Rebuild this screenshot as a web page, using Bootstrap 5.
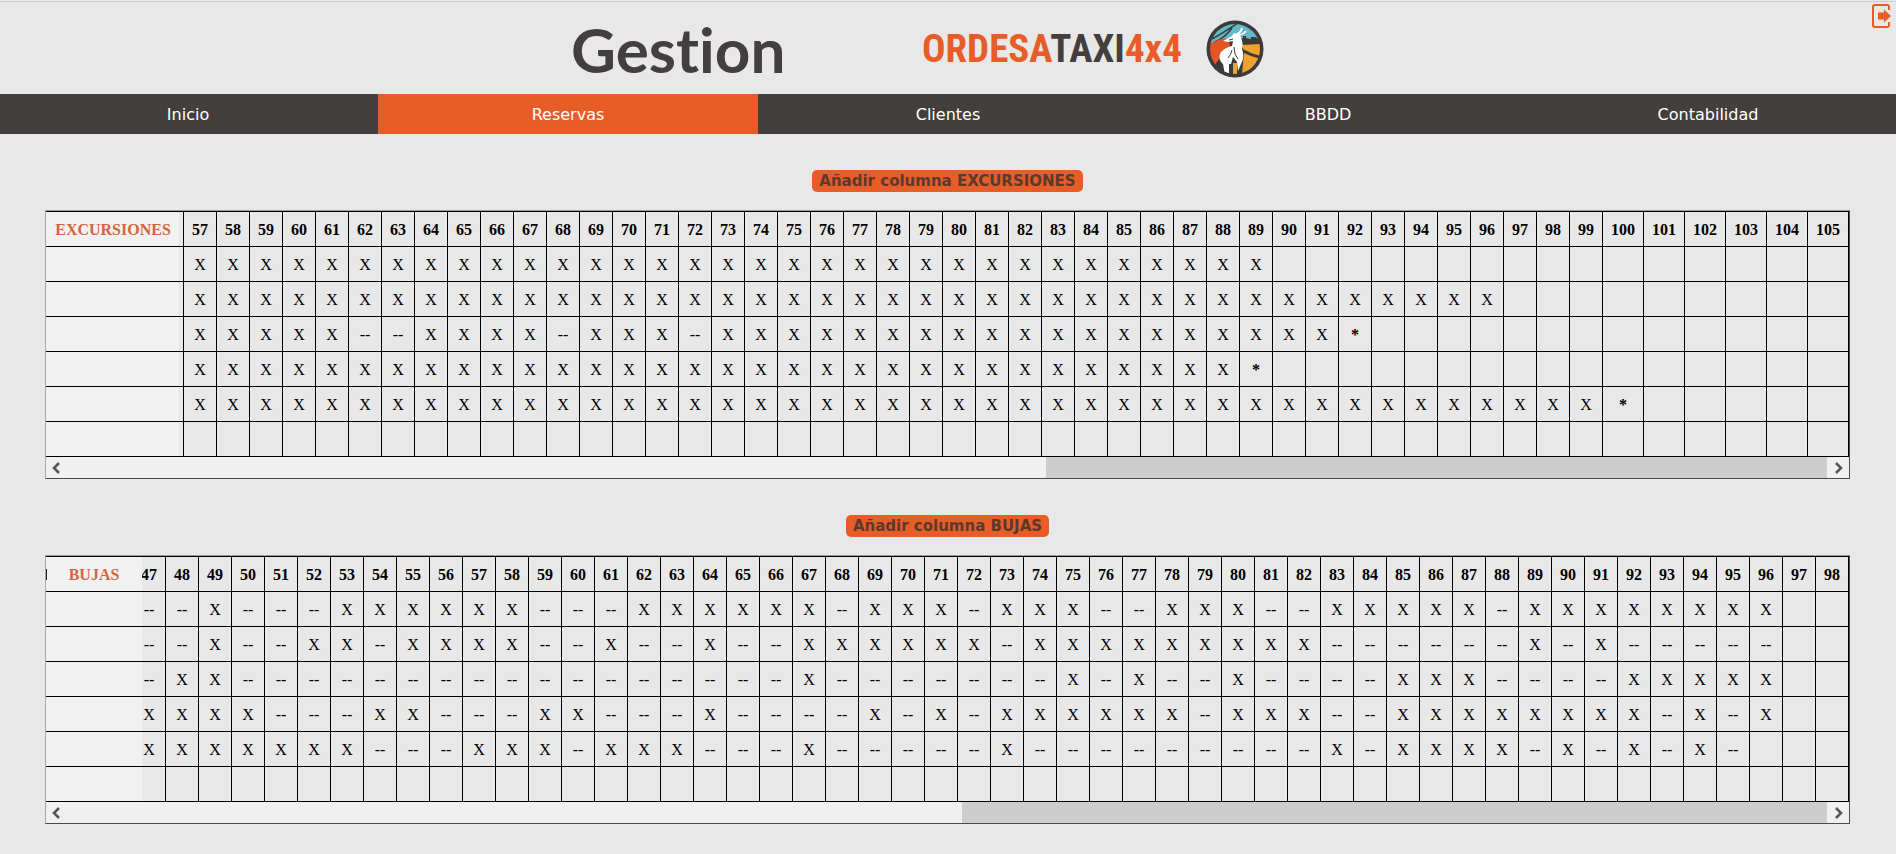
<!DOCTYPE html>
<html lang="es">
<head>
<meta charset="utf-8">
<meta name="viewport" content="width=device-width, initial-scale=1">
<title>Gestion - Ordesa Taxi 4x4</title>
<link href="https://cdn.jsdelivr.net/npm/bootstrap@5.3.0/dist/css/bootstrap.min.css" rel="stylesheet">
<style>
  :root { --naranja: #e85c27; --gris: #433f3e; --fondo: #e8e8e8; }
  body { background: var(--fondo); color: #000; font-family: "DejaVu Sans", Verdana, sans-serif; overflow-x: hidden; }
  .cabecera { height: 94px; border-top: 1px solid #c9cecb; margin-top: 1px; margin-bottom: -1px; padding-left: 571px; }
  @media (max-width: 1400px) { .cabecera { padding-left: 20px; } }
  .rotulo { width: 351px; font: 700 62px/94px Lato, sans-serif; font-variant-ligatures: none; color: var(--gris); }
  .marca { width: 284px; font: 700 39px/94px "Liberation Sans Narrow", "Roboto Condensed", "Liberation Sans", sans-serif; color: var(--naranja); white-space: nowrap; }
  .marca span { color: var(--gris); }
  .salir { top: 2px; right: 4px; line-height: 0; }
  .menu { background: var(--gris); margin: 0 -2px; }
  .menu .nav-link { color: #fff; border-radius: 0; padding: 9px 0 7px; font: 16px/24px "DejaVu Sans", Verdana, sans-serif; }
  .menu .nav-link.active { background: var(--naranja); }
  .bloque { padding: 36px 46px 0 45px; }
  .anadir { background: var(--naranja); color: #5b3a2c; border: 0; border-radius: 5px; padding: 1px 7px 0; font: 700 15px/21px "DejaVu Sans", Verdana, sans-serif; margin-bottom: 18px; }
  .marco { border: 1px solid #4b4b4b; border-top-color: #9b9b9b; border-left-color: #a9a9a9; }
  .visor { overflow-x: hidden; }
  .rejilla { border-collapse: separate; border-spacing: 0; width: max-content; min-width: 100%; border-top: 1px solid #000; font: 16px/18px "Liberation Serif", "Times New Roman", serif; text-align: center; }
  .rejilla th, .rejilla td { height: 35px; padding: 9px 8px 7px; border: solid #000; border-width: 0 1px 1px 0; min-width: 33px; }
  .rejilla .fija { position: sticky; left: 0; color: #d5653e; }
  .ancha .fija { min-width: 138px; padding-right: 11px; background: linear-gradient(90deg, #f1f1f1 133px, var(--fondo) 133px); }
  .corta .fija { min-width: 96px; border-right: 0; background: #f1f1f1; }
  .corta thead .fija { background: linear-gradient(#222, #222) 0 50% / 1px 11px no-repeat #f1f1f1; }
  .barra { height: 21px; background: #f0f0f0; }
  .barra button { width: 22px; border: 0; padding: 0; background: #f0f0f0; line-height: 0; }
  .pulgar { background: #cdcdcd; }
</style>
</head>
<body>
<header class="cabecera d-flex position-relative">
  <div class="rotulo">Gestion</div>
  <div class="marca">ORDESA<span>TAXI</span>4x4</div>
  <svg class="align-self-center" width="58" height="58" viewBox="0 0 58 58" role="img" aria-label="Ordesa Taxi">
    <defs><clipPath id="disco"><circle cx="29" cy="29" r="25"/></clipPath></defs>
    <circle cx="29" cy="29" r="28.500" fill="#3d3a3a"/>
    <g clip-path="url(#disco)">
      <path fill="#62b9c8" d="M0 0h58v20H33L22 19 4 24z"/>
      <path fill="none" stroke="#3d3a3a" stroke-width="1.500" d="M6 19Q17 13 32 3M7 23q12-5 19-15"/>
      <path fill="#e55328" d="M3 25q12-8 20-6l1 8-10 10-6 10-8-8z"/>
      <path fill="#3d3a3a" d="M33 19l4-1v-2h3v2l5 1v-2h4l9 6v3H35z"/>
      <path fill="#f0a22e" d="M36 25l19-1v12q-10-2-18-7zM38 33q8 4 17 6L42 54h-6zM27 43h4v12h-4z"/>
      <path fill="#3d3a3a" d="M19 44h8v12h-8zM31 43h5v12h-5z"/>
      <path fill="#fff" d="M17 21l9-5 2-3 6 2q4 8 2 14 3 8-1 15l-3 7-1-9-4-5-2 7h-2v10l-4 1-2-11q-6-5-2-12 5-5 11-6l1-5-5 1z"/>
      <path fill="none" stroke="#fff" stroke-width="1.800" d="M29 15q6-2 7-7M31 15q6 0 9-4"/>
      <path fill="none" stroke="#3d3a3a" d="M23 20l4-1M28 27q0 8 4 12M26 30q-1 5-4 8"/>
    </g>
  </svg>
  <a href="#salir" class="salir position-absolute" aria-label="Salir">
    <svg width="20" height="24" viewBox="0 0 20 24">
      <path fill="none" stroke="#e85c27" stroke-width="2" d="M17 6V3q0-2-2-2H3Q1 1 1 3v18q0 2 2 2h12q2 0 2-2v-3"/>
      <path fill="#e85c27" d="M6 8.500h6V5.500l7 6.500-7 6.500v-3H6z"/>
    </svg>
  </a>
</header>
<nav class="menu nav nav-pills nav-fill flex-nowrap nav-justified">
  <a class="nav-link" href="#inicio">Inicio</a>
  <a class="nav-link active" aria-current="page" href="#reservas">Reservas</a>
  <a class="nav-link" href="#clientes">Clientes</a>
  <a class="nav-link" href="#bbdd">BBDD</a>
  <a class="nav-link" href="#contabilidad">Contabilidad</a>
</nav>
<main class="pb-4">
  <section class="bloque d-flex flex-column align-items-center">
    <button type="button" class="anadir">Añadir columna EXCURSIONES</button>
    <div class="marco w-100">
      <div class="visor"><table class="rejilla ancha" id="excursiones"></table></div>
      <div class="barra d-flex">
        <button type="button" aria-label="Anterior"><svg width="12" height="12" viewBox="0 0 12 12"><path d="M8 1L3 6l5 5" fill="none" stroke="#555" stroke-width="2.500"/></svg></button>
        <div class="flex-fill d-flex justify-content-end"><div class="pulgar" style="width:44.4%"></div></div>
        <button type="button" aria-label="Siguiente"><svg width="12" height="12" viewBox="0 0 12 12"><path d="M4 1l5 5-5 5" fill="none" stroke="#555" stroke-width="2.500"/></svg></button>
      </div>
    </div>
  </section>
  <section class="bloque d-flex flex-column align-items-center">
    <button type="button" class="anadir">Añadir columna BUJAS</button>
    <div class="marco w-100">
      <div class="visor"><table class="rejilla corta" id="bujas"></table></div>
      <div class="barra d-flex">
        <button type="button" aria-label="Anterior"><svg width="12" height="12" viewBox="0 0 12 12"><path d="M8 1L3 6l5 5" fill="none" stroke="#555" stroke-width="2.500"/></svg></button>
        <div class="flex-fill d-flex justify-content-end"><div class="pulgar" style="width:49.2%"></div></div>
        <button type="button" aria-label="Siguiente"><svg width="12" height="12" viewBox="0 0 12 12"><path d="M4 1l5 5-5 5" fill="none" stroke="#555" stroke-width="2.500"/></svg></button>
      </div>
    </div>
  </section>
</main>
<script src="https://cdn.jsdelivr.net/npm/bootstrap@5.3.0/dist/js/bootstrap.bundle.min.js"></script>
<script>
  // Each row is a string with one mark per column: X, - (drawn as --) or *.
  const X = n => 'X'.repeat(n);
  function pintar(id, titulo, desde, hasta, filas) {
    let html = '<thead><tr><th class="fija" scope="col">' + titulo + '</th>';
    for (let n = desde; n <= hasta; n++) html += '<th scope="col">' + n + '</th>';
    html += '</tr></thead><tbody>';
    for (const fila of filas) {
      html += '<tr><th class="fija" scope="row"></th>';
      for (let i = 0; i <= hasta - desde; i++) {
        const m = fila[i] || '';
        html += '<td>' + (m === '-' ? '--' : m === '*' ? '<b>*</b>' : m) + '</td>';
      }
      html += '</tr>';
    }
    const tabla = document.getElementById(id);
    tabla.innerHTML = html + '</tbody>';
    tabla.parentElement.scrollLeft = tabla.scrollWidth;
  }
  pintar('excursiones', 'EXCURSIONES', 57, 105, [
    X(33), X(40), X(5) + '--' + X(4) + '-' + X(3) + '-' + X(19) + '*',
    X(32) + '*', X(43) + '*', ''
  ]);
  pintar('bujas', 'BUJAS', 47, 98, [
    '--X---XXXXXX---XXXXXX-XXX-XXX--XXX--XXXXX-XXXXXXXX',
    '--X--XX-XXXX--X--X--XXXXXX-XXXXXXXXX------X-X-----',
    '-XX' + '-'.repeat(17) + 'X-------X-X--X----XXX----XXXXX',
    'XXXX---XX---XX---X----X-X-XXXXXX-XXX--XXXXXXXX-X-X',
    'XXXXXXX---XXX-XXX---X-----X---------X-XXXX-X-X-X-',
    ''
  ]);
</script>
</body>
</html>
